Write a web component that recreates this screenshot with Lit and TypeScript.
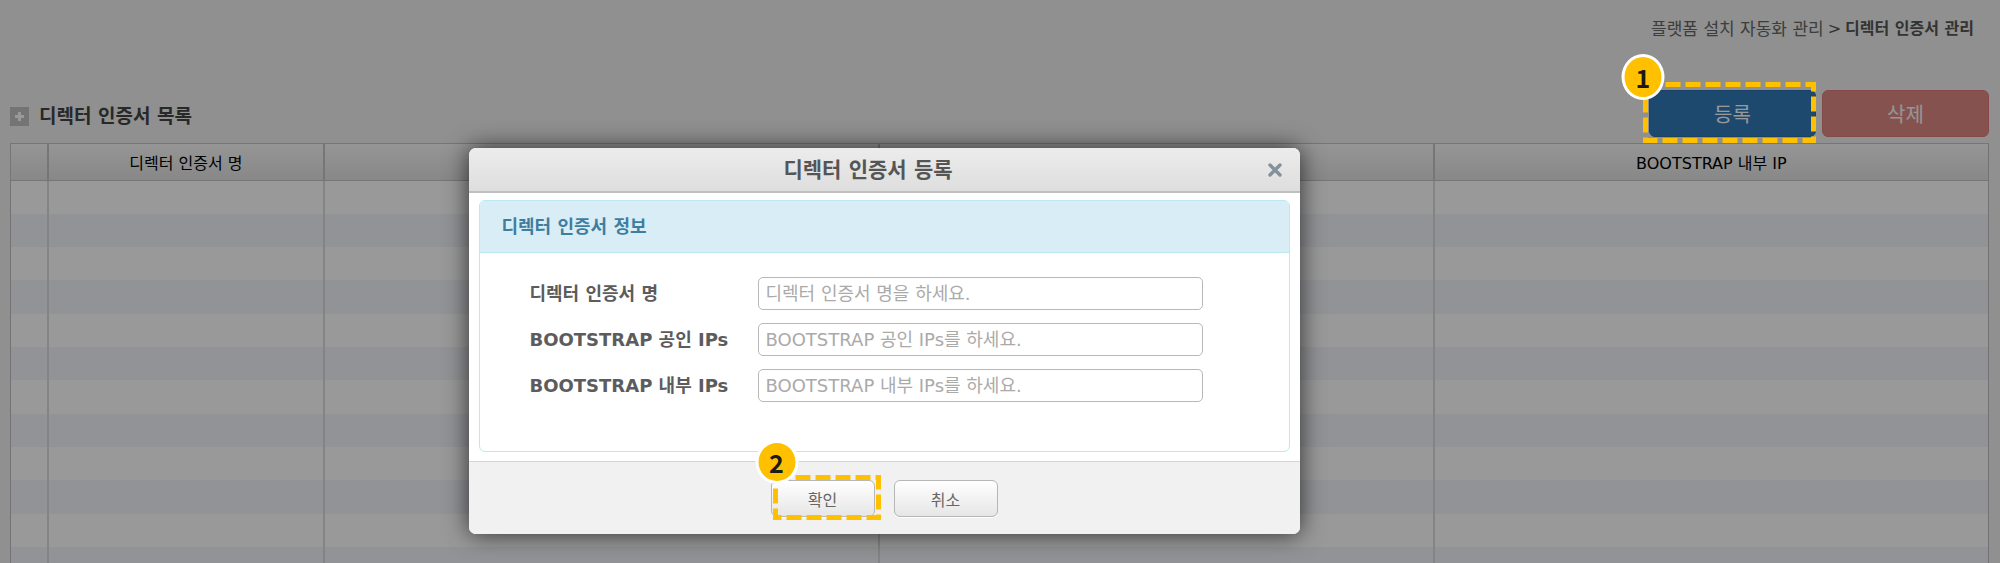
import { LitElement, html, css, svg } from "lit";
import { customElement, property } from "lit/decorators.js";

/** Numbered marker with a dashed frame, laid over the control it points at. */
@customElement("step-callout")
class StepCallout extends LitElement {
  @property({ type: Number }) step = 1;
  @property({ type: Number }) frameWidth = 100;
  @property({ type: Number }) frameHeight = 40;

  static styles = css`
    :host {
      position: absolute;
      z-index: 3;
      pointer-events: none;
    }
    .frame {
      display: block;
    }
    .badge {
      position: absolute;
      top: 0;
      left: 0;
      transform: translate(-50%, -50%);
      box-sizing: border-box;
      width: 43px;
      height: var(--badge-height, 44px);
      margin: var(--badge-shift, 0);
      border: 3px solid #fff;
      border-radius: 50%;
      background: #ffc000;
      color: #1a1a1a;
      display: flex;
      align-items: center;
      justify-content: center;
      font: 700 25px/1 "Noto Sans CJK KR", sans-serif;
    }
  `;

  render() {
    const w = this.frameWidth;
    const h = this.frameHeight;
    return html`
      <svg class="frame" width=${w} height=${h} aria-hidden="true">
        ${svg`<rect x="2.5" y="2.5" width=${w - 5} height=${h - 5} fill="none"
          stroke="#ffc000" stroke-width="5" stroke-dasharray="15 5"></rect>`}
      </svg>
      <span class="badge">${this.step}</span>
    `;
  }
}

@customElement("app-root")
class AppRoot extends LitElement {
  private fields = [
    { id: "name", label: "디렉터 인증서 명", hint: "디렉터 인증서 명을 하세요." },
    { id: "public-ips", label: "BOOTSTRAP 공인 IPs", hint: "BOOTSTRAP 공인 IPs를 하세요." },
    { id: "private-ips", label: "BOOTSTRAP 내부 IPs", hint: "BOOTSTRAP 내부 IPs를 하세요." },
  ];
  private columns = ["", "디렉터 인증서 명", "", "", "BOOTSTRAP 내부 IP"];

  static styles = css`
    :host {
      display: block;
      position: relative;
      height: 100vh;
      overflow: hidden;
      background: #eef1ee;
      font-family: "DejaVu Sans", "Noto Sans CJK KR", sans-serif;
      color: #333;
    }
    * {
      box-sizing: border-box;
    }
    button,
    input {
      font-family: inherit;
      margin: 0;
    }
    .page {
      padding: 16px 11px 0 10px;
    }
    .crumbs {
      display: flex;
      justify-content: flex-end;
      gap: 4px;
      padding-right: 15px;
      font-size: 17px;
      line-height: 26px;
      color: #666;
    }
    .crumbs a {
      color: inherit;
      text-decoration: none;
    }
    .crumbs span,
    .crumbs strong {
      font-size: 16px;
      color: #555;
    }
    .toolbar {
      display: flex;
      align-items: center;
      justify-content: space-between;
      margin: 48px 0 6px;
    }
    .list-title {
      display: flex;
      align-items: center;
      gap: 10px;
      margin: 0;
      padding-top: 5px;
      font-size: 19px;
      line-height: 28px;
      color: #444;
    }
    .plus {
      display: block;
    }
    .actions {
      display: flex;
      gap: 6px;
    }
    .action {
      position: relative;
    }
    .btn {
      display: block;
      width: 167px;
      height: 47px;
      border: 1px solid;
      border-radius: 6px;
      font-size: 20px;
      color: #fff;
    }
    .primary {
      background: #337ab7;
      border-color: #2e6da4;
    }
    .danger {
      background: #d9534f;
      border-color: #d43f3a;
      opacity: 0.65;
    }
    .register-mark {
      top: -8px;
      left: -6px;
      --badge-height: 46px;
      --badge-shift: -5px 0 0 0;
    }
    .ok-mark {
      top: -5px;
      left: 2px;
      --badge-shift: -13px 0 0 4px;
    }
    .grid {
      width: 100%;
      height: 438px;
      table-layout: fixed;
      border-collapse: collapse;
      border: 1px solid #c0c0c0;
      font-size: 16px;
    }
    .check {
      width: 37px;
    }
    .name {
      width: 14%;
    }
    .grid th {
      height: 37px;
      padding: 0;
      border: 1px solid #c5c5c5;
      border-right-width: 2px;
      font-weight: 400;
      font-size: 16px;
      color: #000;
    }
    .grid .head {
      background: linear-gradient(#f9f9f9, #e2e2e2);
    }
    .grid td {
      height: 33px;
      padding: 0;
      border-right: 2px solid #dcdcdc;
      background: #fff;
    }
    .grid th:last-child,
    .grid td:last-child {
      border-right: 1px solid #c0c0c0;
    }
    .grid tr:nth-child(even) td {
      background: #f3f6fa;
    }
    .shade {
      position: absolute;
      inset: 0;
      z-index: 1;
      background: rgba(0, 0, 0, 0.4);
    }
    .stage {
      position: absolute;
      inset: 0;
      z-index: 2;
      display: flex;
      justify-content: center;
      align-items: flex-start;
      padding: 148px 232px 0 0;
    }
    .dialog {
      width: 831px;
      border-radius: 7px;
      background: #fff;
      box-shadow: 0 0 25px rgba(0, 0, 0, 0.7);
      color: #555;
    }
    .dialog-head {
      display: flex;
      align-items: center;
      height: 45px;
      border-bottom: 2px solid #bfbfbf;
      border-radius: 7px 7px 0 0;
      background: linear-gradient(#ececec, #dedede);
    }
    .dialog-title {
      flex: 1;
      margin: 0;
      text-align: center;
      font-size: 21px;
      line-height: 30px;
    }
    .close {
      display: flex;
      margin-right: 18px;
      padding: 0;
      border: 0;
      background: none;
    }
    .dialog-body {
      padding: 7px 10px 9px;
    }
    .panel {
      border: 1px solid #bce8f1;
      border-radius: 6px;
    }
    .panel-title {
      margin: 0;
      padding: 12px 22px;
      border-bottom: 1px solid #bce8f1;
      border-radius: 5px 5px 0 0;
      background: #d9edf7;
      color: #3f7d9f;
      font-size: 18px;
      line-height: 27px;
    }
    .form {
      display: grid;
      grid-template-columns: 228px 445px;
      align-items: center;
      row-gap: 13px;
      padding: 24px 50px 49px;
    }
    .label {
      font-size: 18px;
      font-weight: 700;
      line-height: 27px;
      color: #5c5c5c;
    }
    .input {
      width: 100%;
      height: 33px;
      padding: 0 7px;
      border: 1px solid #b8b8b8;
      border-radius: 5px;
      background: #fff;
      font-size: 18px;
      color: #555;
    }
    .input::placeholder {
      color: #aaa;
      opacity: 1;
    }
    .dialog-foot {
      display: flex;
      justify-content: center;
      gap: 19px;
      padding: 18px 0 17px;
      border-top: 1px solid #d0d8d8;
      border-radius: 0 0 7px 7px;
      background: #f1f1f1;
    }
    .plain {
      display: block;
      width: 104px;
      height: 37px;
      border: 1px solid #b6b6b6;
      border-radius: 6px;
      background: linear-gradient(#fff, #e6e6e6);
      box-shadow: 0 1px 0 #fff;
      font-size: 16px;
      color: #666;
    }
  `;

  render() {
    return html`
      <main class="page">
        <nav class="crumbs">
          <a href="#">플랫폼 설치 자동화 관리</a>
          <span>&gt;</span>
          <strong>디렉터 인증서 관리</strong>
        </nav>
        <div class="toolbar">
          <h1 class="list-title">
            <svg class="plus" width="19" height="19" aria-hidden="true">
              <rect width="19" height="19" fill="#c2c2c2"></rect>
              <path d="M9.5 5v9M5 9.5h9" stroke="#fff" stroke-width="3"></path>
            </svg>
            디렉터 인증서 목록
          </h1>
          <div class="actions">
            <div class="action">
              <button class="btn primary" type="button">등록</button>
              <step-callout class="register-mark" step="1" frameWidth="173" frameHeight="61"></step-callout>
            </div>
            <button class="btn danger" type="button" disabled>삭제</button>
          </div>
        </div>
        <table class="grid">
          <colgroup>
            <col class="check" />
            <col class="name" />
            <col span="3" />
          </colgroup>
          <thead class="head">
            <tr>
              ${this.columns.map((c) => html`<th scope="col">${c}</th>`)}
            </tr>
          </thead>
          <tbody>
            ${Array.from({ length: 12 }, () => html`<tr>${this.columns.map(() => html`<td></td>`)}</tr>`)}
          </tbody>
        </table>
      </main>
      <div class="shade"></div>
      <div class="stage">
        <section class="dialog" role="dialog" aria-labelledby="dialog-title">
          <header class="dialog-head">
            <h2 class="dialog-title" id="dialog-title">디렉터 인증서 등록</h2>
            <button class="close" type="button" aria-label="닫기">
              <svg width="14" height="14" viewBox="0 0 14 14" aria-hidden="true">
                <path d="M2 2l10 10M12 2L2 12" stroke="#85919a" stroke-width="3.4" stroke-linecap="round"></path>
              </svg>
            </button>
          </header>
          <div class="dialog-body">
            <div class="panel">
              <h3 class="panel-title">디렉터 인증서 정보</h3>
              <form class="form">
                ${this.fields.map(
                  (f) => html`
                    <label class="label" for=${f.id}>${f.label}</label>
                    <input class="input" id=${f.id} type="text" placeholder=${f.hint} />
                  `
                )}
              </form>
            </div>
          </div>
          <footer class="dialog-foot">
            <div class="action">
              <button class="plain" type="button">확인</button>
              <step-callout class="ok-mark" step="2" frameWidth="108" frameHeight="45"></step-callout>
            </div>
            <button class="plain" type="button">취소</button>
          </footer>
        </section>
      </div>
    `;
  }
}
